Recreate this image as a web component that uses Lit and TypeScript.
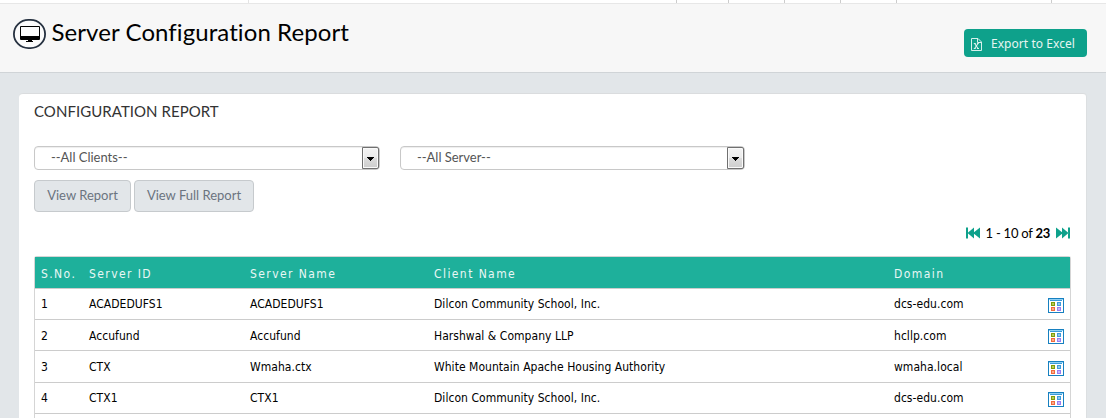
import { LitElement, html, css, svg } from "lit";
import { customElement, property } from "lit/decorators.js";

interface ServerRow {
  id: string;
  name: string;
  client: string;
  domain: string;
}

const ROWS: ServerRow[] = [
  { id: "ACADEDUFS1", name: "ACADEDUFS1", client: "Dilcon Community School, Inc.", domain: "dcs-edu.com" },
  { id: "Accufund", name: "Accufund", client: "Harshwal & Company LLP", domain: "hcllp.com" },
  { id: "CTX", name: "Wmaha.ctx", client: "White Mountain Apache Housing Authority", domain: "wmaha.local" },
  { id: "CTX1", name: "CTX1", client: "Dilcon Community School, Inc.", domain: "dcs-edu.com" },
];

const DOTS = [
  { x: 3, y: 4, edge: "#7f9c0a", core: "#b5c95a" },
  { x: 9, y: 4, edge: "#3f9bdc", core: "#8fc8ef" },
  { x: 3, y: 9, edge: "#f26a3c", core: "#f9ab8c" },
  { x: 9, y: 9, edge: "#9a7df0", core: "#c7b6fb" },
];

@customElement("select-box")
export class SelectBox extends LitElement {
  @property() label = "";

  static styles = css`
    :host {
      display: flex;
      box-sizing: border-box;
      height: 24px;
      border: 1px solid #c8c8c8;
      border-radius: 4px;
      background: #fff;
      box-shadow: inset 0 1px 1px rgba(0, 0, 0, 0.07);
      font: 13px/21px Lato, sans-serif;
      color: #555;
      letter-spacing: -0.02px;
    }
    .label {
      flex: 1;
      padding-left: 16px;
    }
    .arrow {
      box-sizing: border-box;
      width: 17px;
      height: 22px;
      border: 1px solid #707070;
      box-shadow: inset 0 0 0 1px #fafafa;
      background: linear-gradient(#f3f3f3 0%, #ebebeb 48%, #dcdcdc 52%, #cdcdcd 100%);
      border-radius: 0 2px 2px 0;
    }
    svg {
      display: block;
    }
  `;

  render() {
    return html`<span class="label">${this.label}</span>
      <span class="arrow"
        ><svg width="15" height="20" shape-rendering="crispEdges">
          <path d="M4 9h7v1h-1v1h-1v1h-1v1h-1v-1h-1v-1h-1v-1h-1z" fill="#000" /></svg
      ></span>`;
  }
}

@customElement("app-root")
export class AppRoot extends LitElement {
  static styles = css`
    :host {
      display: flex;
      flex-direction: column;
      height: 418px;
      overflow: hidden;
      background: #e2e6e9;
      font-family: Lato, sans-serif;
      color: #000;
    }
    svg {
      display: block;
    }
    .strip {
      display: grid;
      grid-template-columns: 249px 428px 52px 56px 56px 56px 155px 1fr;
      height: 3px;
      flex: none;
      background: #fff;
      border-bottom: 1px solid #e7e7e7;
    }
    .strip i {
      border-right: 1px solid #ccc;
    }
    .strip i:first-child {
      border-color: #e4e4e4;
    }
    .strip i:last-child {
      border: 0;
    }
    .header {
      display: flex;
      align-items: flex-start;
      height: 68px;
      flex: none;
      padding: 0 19px 0 13px;
      background: #f7f7f7;
      border-bottom: 1px solid #d0d4d7;
    }
    .badge {
      margin-top: 15px;
    }
    .title {
      flex: 1;
      margin: 13px 0 0 5.5px;
      font-size: 24px;
      line-height: 30px;
      font-weight: 400;
      letter-spacing: 0.08px;
      white-space: nowrap;
    }
    .export {
      display: flex;
      align-items: center;
      box-sizing: border-box;
      width: 123px;
      height: 28px;
      margin-top: 25px;
      padding-left: 7px;
      gap: 9px;
      border-radius: 4px;
      background: #0ea18b;
      color: #e6f5f2;
      font: 12px/28px "Noto Sans", sans-serif;
      white-space: nowrap;
    }
    .export svg {
      margin-top: 2px;
    }
    .export span {
      padding-top: 2px;
      letter-spacing: 0.05px;
    }
    .card {
      flex: none;
      box-sizing: border-box;
      width: 1068px;
      height: 340px;
      margin: 20px 0 0 19px;
      padding: 0 16px 0 15px;
      border-top: 1px solid #dadcde;
      border-right: 1px solid #dcdfe1;
      border-radius: 4px;
      background: #fff;
    }
    .card-title {
      margin: 7px 0 0;
      font-size: 15px;
      line-height: 20px;
      font-weight: 400;
      letter-spacing: 0.05px;
      color: #333;
    }
    .filters {
      display: grid;
      grid-template-columns: 346px 345px;
      column-gap: 20px;
      margin-top: 25px;
    }
    .actions {
      display: flex;
      gap: 3px;
      margin-top: 10px;
    }
    .btn {
      box-sizing: border-box;
      height: 32px;
      border: 1px solid #c6cacd;
      border-radius: 4px;
      background: #e2e6e9;
      color: #6b7480;
      font-size: 13px;
      line-height: 29px;
      text-align: center;
      white-space: nowrap;
    }
    .view {
      width: 97px;
    }
    .full {
      width: 120px;
    }
    .pager {
      display: flex;
      justify-content: flex-end;
      align-items: center;
      gap: 6px;
      height: 18px;
      margin-top: 12px;
      font-size: 13px;
      line-height: 18px;
      letter-spacing: -0.25px;
    }
    .table {
      box-sizing: border-box;
      width: 1037px;
      height: 170px;
      margin-top: 14px;
      border: 1px solid #d5d5d5;
      border-bottom: 0;
      border-radius: 3px 3px 0 0;
      font: 12px/31px "DejaVu Sans Condensed", "DejaVu Sans", sans-serif;
      font-stretch: condensed;
      letter-spacing: 0.04px;
    }
    .row {
      display: grid;
      grid-template-columns: 48px 161px 184px 460px 154px 1fr;
      box-sizing: border-box;
      height: 31px;
      padding-left: 6px;
      border-bottom: 1px solid #ccc;
      white-space: nowrap;
    }
    .row:nth-child(4) {
      height: 32px;
    }
    .row:nth-child(3),
    .row:nth-child(4) {
      line-height: 33px;
    }
    .head {
      height: 32px;
      background: #1eb09b;
      color: #e9f7f5;
      line-height: 34px;
      letter-spacing: 1.42px;
    }
    .grid-icon {
      margin-top: 9px;
    }
    .row:nth-child(4) .grid-icon {
      margin-top: 10px;
    }
  `;

  private gridIcon() {
    return html`<svg class="grid-icon" width="16" height="15" shape-rendering="crispEdges">
      <rect width="16" height="15" fill="#1780c0" />
      <rect x="1" y="1" width="14" height="13" fill="#fff" />
      <rect x="1" y="1" width="14" height="1" fill="#8fd0f5" />
      <rect x="2" y="2" width="12" height="1" fill="#3a9bd8" />
      ${DOTS.map(
        (d) => svg`<rect x=${d.x} y=${d.y} width="4" height="4" fill=${d.edge} />
          <rect x=${d.x + 1} y=${d.y + 1} width="2" height="2" fill=${d.core} />`
      )}
    </svg>`;
  }

  render() {
    return html`
      <div class="strip">${Array.from({ length: 8 }, () => html`<i></i>`)}</div>
      <header class="header">
        <svg class="badge" width="33" height="30" viewBox="0 0 33 30">
          <rect x="0.900" y="0.900" width="31.200" height="28.200" rx="14.500" ry="14.100" fill="#fbfbfb" stroke="#263140" stroke-width="1.800" />
          <path fill="#000" fill-rule="evenodd" d="M8 7h18a1 1 0 0 1 1 1v12a1 1 0 0 1-1 1H8a1 1 0 0 1-1-1V8a1 1 0 0 1 1-1zM8 8v9h18V8z" />
          <path fill="#000" d="M15 21h4v1h1v1h-7v-1h2z" />
        </svg>
        <h1 class="title">Server Configuration Report</h1>
        <div class="export">
          <svg width="11" height="13" viewBox="0 0 11 13" fill="none" stroke="#d7f0ec">
            <path d="M.5.5h6.500l3.500 3.500v8.500h-10zM6.500.5v4h4" />
            <path stroke-width="1.100" d="M3.700 5.500l3.300 5M7 5.500l-3.300 5M2.800 10.500h2M6 10.500h2M2.800 5.500h2M6 5.500h1.800" />
          </svg>
          <span>Export to Excel</span>
        </div>
      </header>
      <section class="card">
        <h2 class="card-title">CONFIGURATION REPORT</h2>
        <div class="filters">
          <select-box label="--All Clients--"></select-box>
          <select-box label="--All Server--"></select-box>
        </div>
        <div class="actions">
          <div class="btn view">View Report</div>
          <div class="btn full">View Full Report</div>
        </div>
        <div class="pager">
          <svg width="14" height="12" viewBox="0 0 14 12" fill="#0ea18b">
            <path d="M0 0.500h2v11h-2zM1.500 6l6.500-5.500v11zM7 6l7-5.500v11z" />
          </svg>
          <span>1 - 10 of <b>23</b></span>
          <svg width="14" height="12" viewBox="0 0 14 12" fill="#0ea18b">
            <path d="M12 0.500h2v11h-2zM12.500 6l-6.500-5.500v11zM7 6l-7-5.500v11z" />
          </svg>
        </div>
        <div class="table">
          <div class="row head">
            <span>S.No.</span><span>Server ID</span><span>Server Name</span><span>Client Name</span><span>Domain</span>
          </div>
          ${ROWS.map(
            (r, i) => html`<div class="row">
              <span>${i + 1}</span><span>${r.id}</span><span>${r.name}</span><span>${r.client}</span
              ><span>${r.domain}</span>${this.gridIcon()}
            </div>`
          )}
        </div>
      </section>
    `;
  }
}
